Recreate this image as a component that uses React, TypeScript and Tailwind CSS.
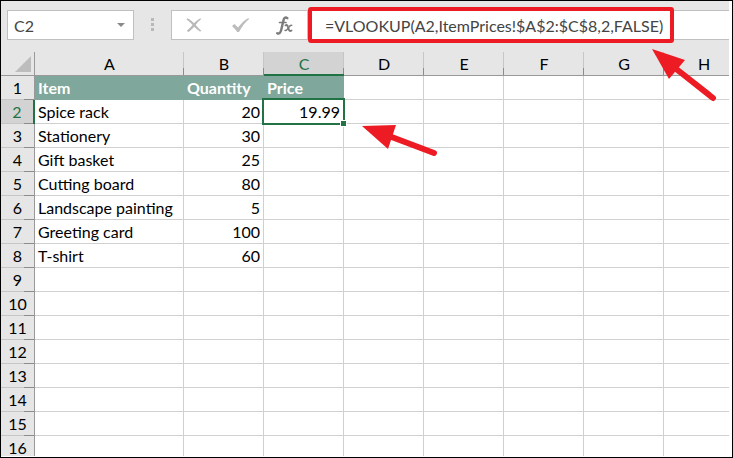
import React from 'react';
import clsx from 'clsx';

type Row = {
  item: string;
  quantity: number;
  price?: string;
};

const columns = ['A', 'B', 'C', 'D', 'E', 'F', 'G', 'H'];

const items: Row[] = [
  { item: 'Spice rack', quantity: 20, price: '19.99' },
  { item: 'Stationery', quantity: 30 },
  { item: 'Gift basket', quantity: 25 },
  { item: 'Cutting board', quantity: 80 },
  { item: 'Landscape painting', quantity: 5 },
  { item: 'Greeting card', quantity: 100 },
  { item: 'T-shirt', quantity: 60 },
];

const ROW_COUNT = 16;

const FormulaBar: React.FC = () => (
  <div className="flex h-[51px] shrink-0 items-start bg-[#e6e6e6] pt-[9px] pl-1.5 text-[#444444]">
    <div className="flex h-[30px] w-[127px] shrink-0 items-center border border-[#c0c0c0] bg-white">
      <input
        aria-label="Name box"
        defaultValue="C2"
        className="h-full w-full min-w-0 bg-transparent pl-1.5 text-base outline-none"
      />
      <button type="button" aria-label="Show names" className="flex h-full w-6 shrink-0 items-center justify-center">
        <svg viewBox="0 0 8 4" className="h-1 w-2" fill="#8a8a8a">
          <path d="M0 0h8L4 4z" />
        </svg>
      </button>
    </div>

    <svg viewBox="0 0 3 13" className="mx-[17px] mt-2 h-[13px] w-[3px] shrink-0" fill="#b8b8b8">
      <path d="M0 0h3v3H0zM0 5h3v3H0zM0 10h3v3H0z" />
    </svg>

    <div className="flex h-[30px] w-[137px] shrink-0 items-center border border-[#c0c0c0] bg-white">
      <button type="button" aria-label="Cancel" className="flex h-full w-11 items-center justify-center">
        <svg viewBox="0 0 16 14" className="h-3.5 w-4" fill="#b8b8b8">
          <path d="M1.500 .3C4 1.500 6 3.200 8 5.200C10 3.200 12 1.500 14.500 .3L15 1.200C13 2.800 11.200 4.700 9.600 6.900C11.500 8.900 13.300 11 15.500 13L14 13.600C11.800 12.200 9.900 10.500 8.200 8.700C6.400 10.500 4.500 12.600 2.300 14L.8 12.800C2.900 11.200 4.900 9.200 6.600 7C4.900 5 3 3.200.6 1.800z" />
        </svg>
      </button>
      <button type="button" aria-label="Enter" className="flex h-full w-12 items-center justify-center">
        <svg viewBox="0 0 17 14" className="h-3.5 w-[17px]" fill="#bcbcbc">
          <path d="M0 8L2.500 6L6 9.500C9 5.500 12.500 2.200 16.500 0L17 1C13 4.500 9.800 8.800 7 14H5.200C4 12 2 10 0 8z" />
        </svg>
      </button>
      <button type="button" aria-label="Insert function" className="flex h-full w-10 items-center justify-center">
        <svg viewBox="0 0 17 19" className="h-[19px] w-[17px]" fill="none" stroke="#7c7c7c" strokeLinecap="round">
          <path d="M11.300 2.200C9.500 .6 8 1.800 7.400 4.500L5.200 14C4.600 16.800 3 18.300 1.200 17.200" strokeWidth="2.400" />
          <path d="M3.500 6.500h6.500" strokeWidth="1.700" />
          <path d="M9.500 9.300c1.500-.8 2 0 2.500 1.700l.8 2.500c.5 1.500 1.200 2 2.700 1" strokeWidth="1.900" />
          <path d="M15.800 9.300c-1.500-.5-2.300 1-3.300 2.500s-2 3-3.500 2.700" strokeWidth="1.400" />
        </svg>
      </button>
    </div>

    <div className="relative h-[30px] min-w-0 flex-1">
      <input
        aria-label="Formula"
        defaultValue="=VLOOKUP(A2,ItemPrices!$A$2:$C$8,2,FALSE)"
        className="h-full w-full border-y border-[#c0c0c0] bg-white pl-[17px] text-base outline-none"
      />
      <div className="pointer-events-none absolute -top-[3px] left-0 h-9 w-[366px] rounded-[3px] border-4 border-[#ed1c24]" />
    </div>
  </div>
);

const SelectionFrame: React.FC = () => (
  <div className="pointer-events-none absolute -top-0.5 -right-0.5 -bottom-0.5 -left-0.5 z-10 border-2 border-[#217346]">
    <span className="absolute -right-[4px] -bottom-[4px] h-[7px] w-[7px] border border-white bg-[#217346]" />
  </div>
);

const Sheet: React.FC = () => (
  <div className="min-h-0 flex-1 overflow-hidden">
    <table className="w-[743px] min-w-full table-fixed border-separate border-spacing-0 text-base">
      <colgroup>
        <col className="w-[34px]" />
        <col className="w-[149px]" />
        {columns.slice(1, 7).map((name) => (
          <col key={name} className="w-20" />
        ))}
        <col />
      </colgroup>
      <thead>
        <tr className="h-6 bg-[#e6e6e6]">
          <th className="border-r border-b border-[#999999] p-0" aria-label="Select all">
            <svg viewBox="0 0 16 16" className="mr-[3px] ml-auto h-4 w-4" fill="#bdbdbd">
              <path d="M16 0v16H0z" />
            </svg>
          </th>
          {columns.map((name) => (
            <th
              key={name}
              scope="col"
              className={clsx(
                'h-6 bg-[linear-gradient(to_bottom,#c6c6c6_16px,#8c8c8c_16px)] bg-[length:1px_100%] bg-right bg-no-repeat px-0 pb-0 font-normal',
                name === 'C'
                  ? 'border-b-2 border-b-[#217346] bg-[#d3d3d3] pt-0.5 leading-5 text-[#217346]'
                  : 'border-b border-b-[#999999] pt-0 leading-[22px] text-black'
              )}
            >
              {name}
            </th>
          ))}
        </tr>
      </thead>
      <tbody>
        {Array.from({ length: ROW_COUNT }, (_, index) => {
          const number = index + 1;
          const row = items[index - 1];
          return (
            <tr key={number} className="h-6">
              <th
                scope="row"
                className={clsx(
                  'h-6 bg-[linear-gradient(to_right,#c6c6c6_23px,#8c8c8c_23px)] bg-[length:100%_1px] bg-bottom bg-no-repeat p-0 font-normal leading-[22px]',
                  number === 2
                    ? 'border-r-2 border-r-[#217346] bg-[#d3d3d3] text-[#217346]'
                    : 'border-r border-r-[#999999] bg-[#e6e6e6] text-black'
                )}
              >
                {number}
              </th>
              {columns.map((name) => {
                if (number === 1 && name <= 'C') {
                  return (
                    <td key={name} className="h-6 bg-[#7fa79b] px-[3px] py-0 font-bold leading-[22px] text-white">
                      {name === 'A' ? 'Item' : name === 'B' ? 'Quantity' : 'Price'}
                    </td>
                  );
                }
                return (
                  <td
                    key={name}
                    className={clsx(
                      'relative h-6 border-b border-[#d0d0d0] px-[3px] py-0 leading-[22px] whitespace-nowrap text-black',
                      name !== 'H' && 'border-r',
                      name !== 'A' && 'text-right'
                    )}
                  >
                    {name === 'A' && row?.item}
                    {name === 'B' && row?.quantity}
                    {name === 'C' && row?.price}
                    {name === 'C' && number === 2 && <SelectionFrame />}
                  </td>
                );
              })}
            </tr>
          );
        })}
      </tbody>
    </table>
  </div>
);

const Arrows: React.FC = () => (
  <svg
    className="pointer-events-none absolute top-[47px] left-[361px] z-20 h-[110px] w-[358px]"
    viewBox="0 0 358 110"
    fill="#ed1c24"
    stroke="#ed1c24"
    strokeLinecap="round"
  >
    <path d="M0 78L34 77L26 101z" stroke="none" />
    <path d="M27 88L72 105" strokeWidth="6" />
    <path d="M290 1L323 12L307 31z" stroke="none" />
    <path d="M313 20L351 50" strokeWidth="6" />
  </svg>
);

const App: React.FC = () => {
  return (
    <div className="relative flex h-screen flex-col overflow-hidden border border-black bg-white pr-[3px] pb-px font-[Lato,Carlito,sans-serif]">
      <FormulaBar />
      <Sheet />
      <Arrows />
    </div>
  );
};

export default App;
